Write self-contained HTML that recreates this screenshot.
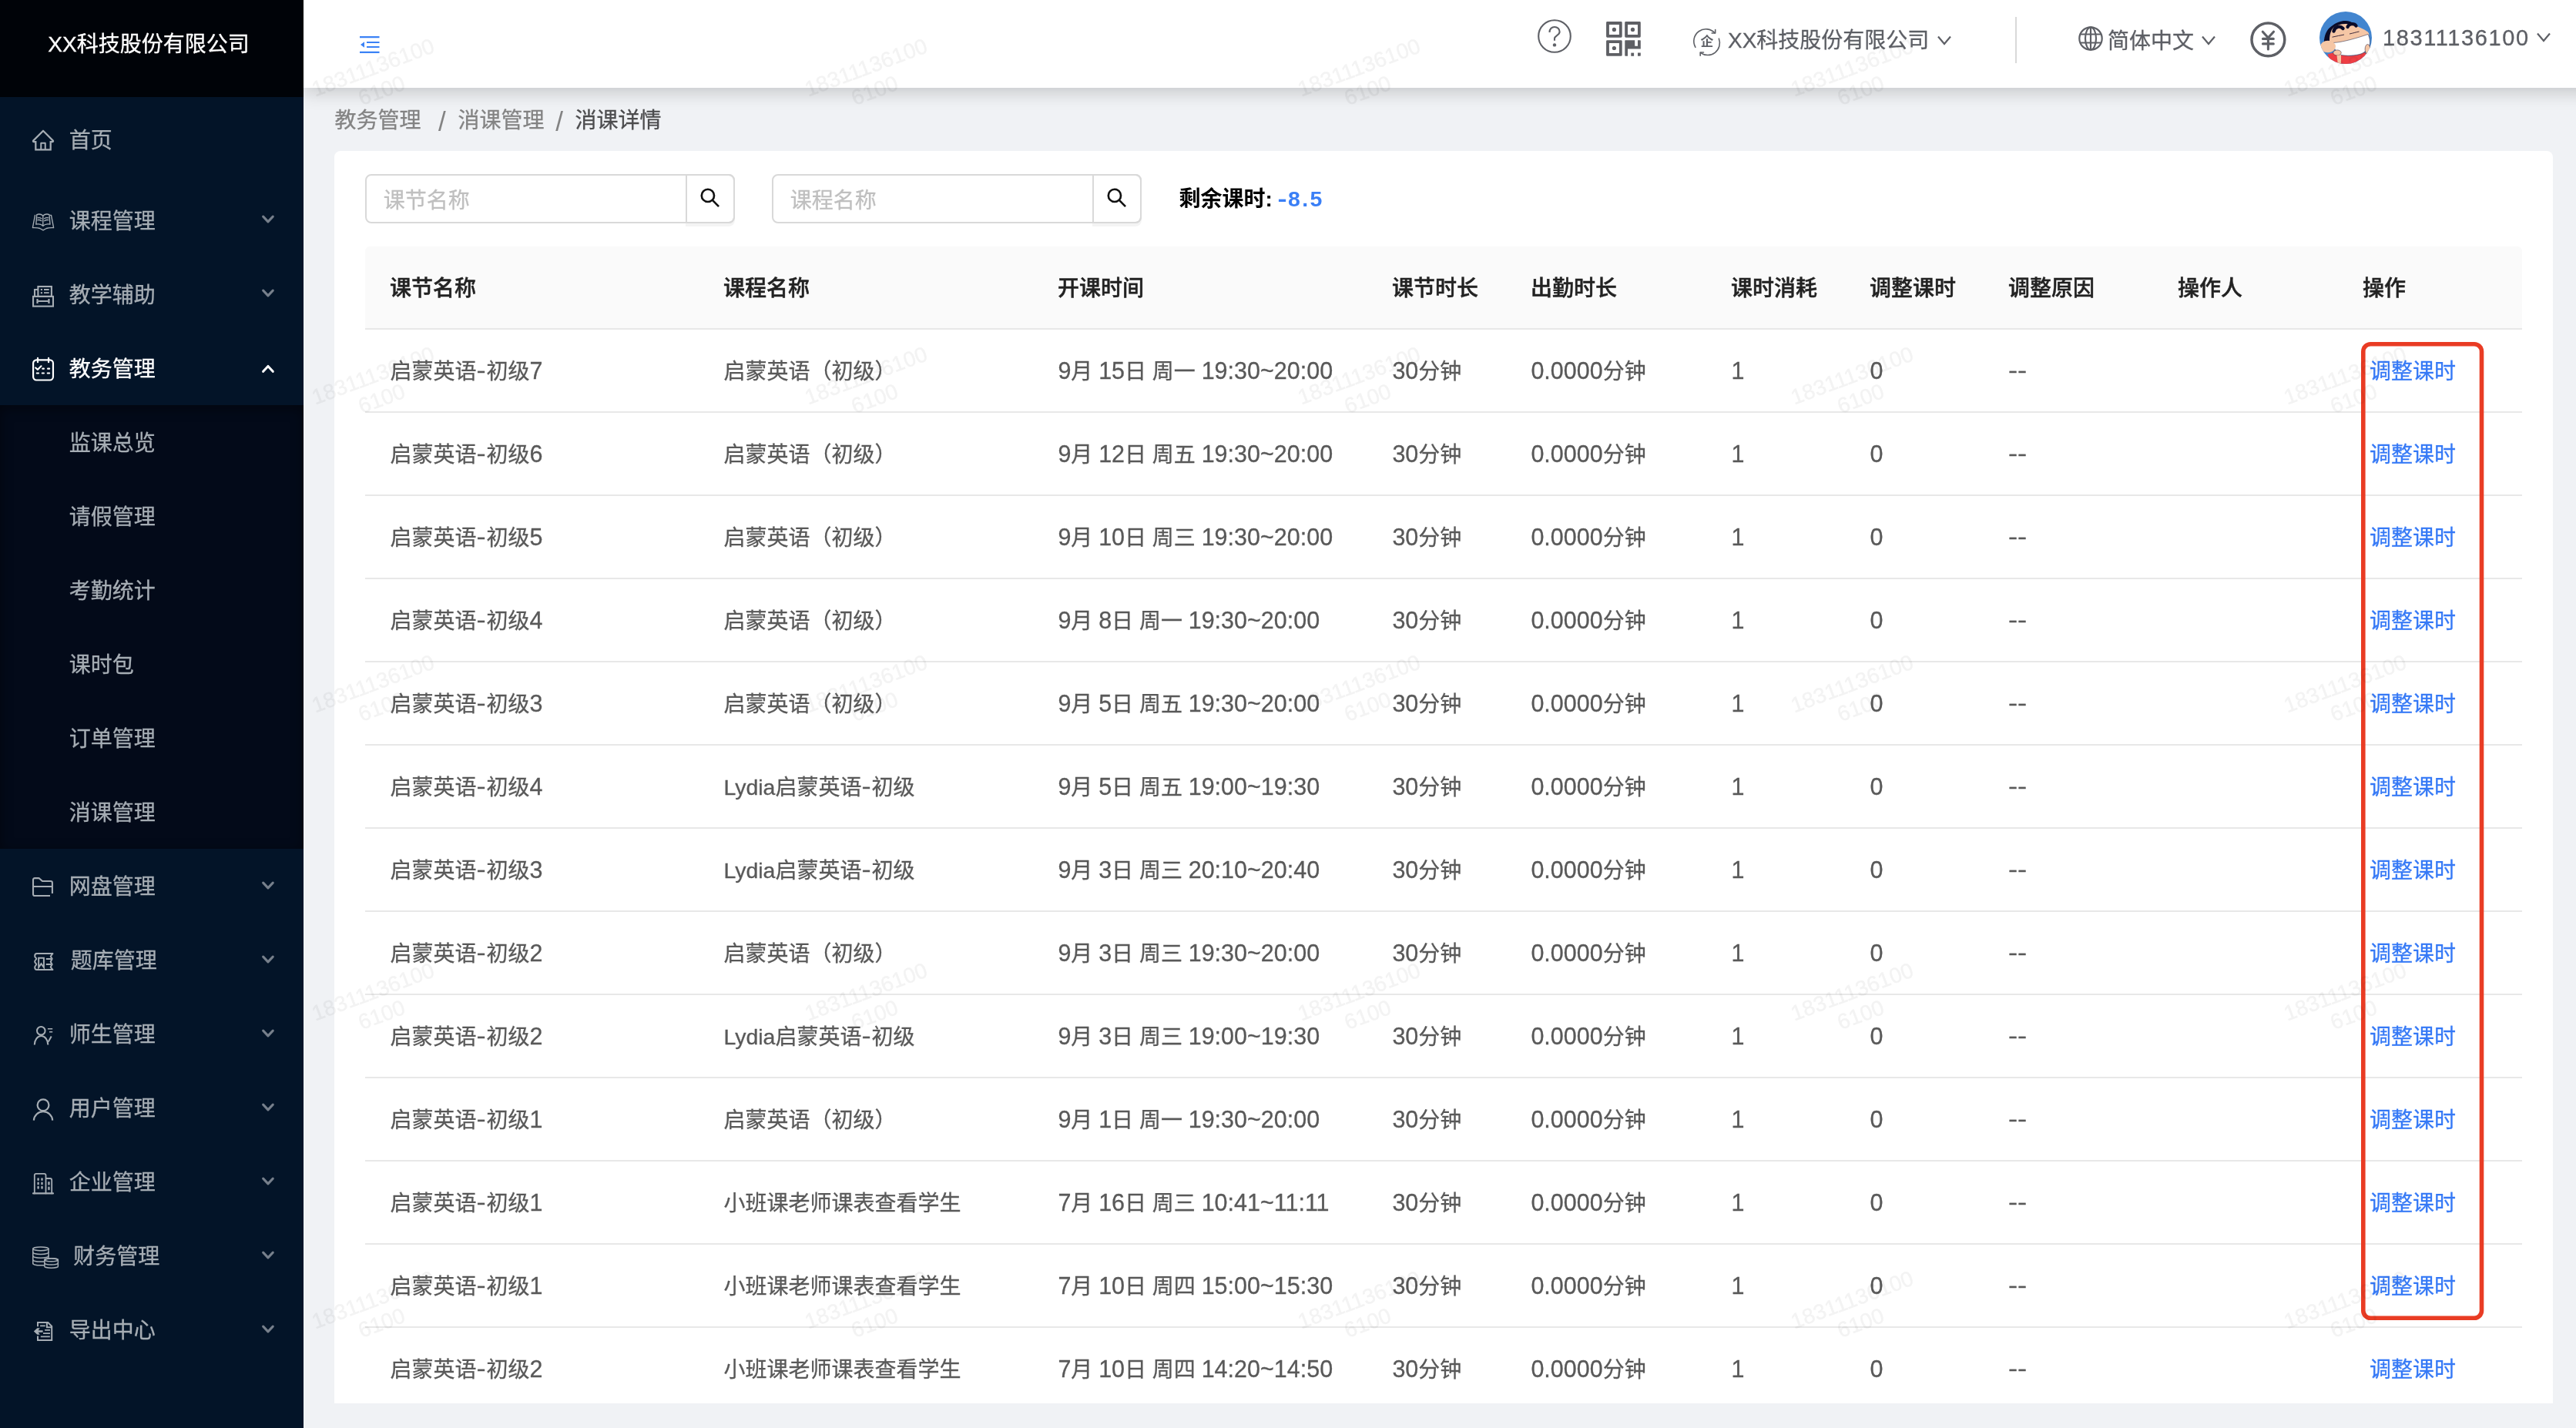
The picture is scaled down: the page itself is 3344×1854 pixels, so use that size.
<!DOCTYPE html>
<html lang="zh-CN"><head><meta charset="utf-8"><title>消课详情</title>
<style>
*{box-sizing:border-box;margin:0;padding:0}
html,body{width:3344px;height:1854px;overflow:hidden}
body{position:relative;background:#f0f2f5;font-family:"Liberation Sans","Noto Sans CJK SC",sans-serif;font-size:28px;color:#595959;-webkit-text-stroke:.3px}
ul{list-style:none}
svg{display:block;position:absolute;overflow:visible}
.side{will-change:transform;position:absolute;left:0;top:0;width:394px;height:1854px;background:#031428;z-index:5}
.logo{position:absolute;left:0;top:0;width:394px;height:126px;background:#000308;color:#fff;text-align:center;font-size:28px;line-height:116.5px;font-weight:400}
.logo span{position:relative;left:-4px}
.subbg{position:absolute;left:0;top:525.5px;width:394px;height:576px;background:#030a19;box-shadow:inset 0 4px 16px rgba(0,0,0,.45)}
.menu{position:absolute;left:0;top:0;width:394px;height:1854px}
.mi{position:absolute;left:0;width:394px;height:80px;line-height:80px;color:#a6adb4;font-size:28px;white-space:nowrap}
.mi.on{color:#fff}
.mi .mt{position:absolute;top:2.5px;margin-left:-1.2px}
.hdr{will-change:transform;position:absolute;left:394px;top:0;width:3050px;height:114px;background:#fff;box-shadow:0 6px 22px rgba(0,0,0,.18);z-index:3}
.hdr .ht{position:absolute;top:0;line-height:106px;color:#5d5f65;-webkit-text-stroke-color:#5d5f65;font-size:28px;white-space:nowrap;margin-left:-394px}
.hdr .ph{line-height:99px;letter-spacing:1.6px}
.hdr .ph .l{font-size:29px}
.vdiv{position:absolute;left:2222px;top:22px;width:2px;height:60px;background:#d9d9d9}
.bc{will-change:transform;position:absolute;left:0;top:114px;width:3344px;height:82px;font-size:28px;line-height:82px;white-space:nowrap}
.bc span{position:absolute;top:2.2px}
.bc .sep{font-size:35px;top:2.7px;-webkit-text-stroke:0}
.b1{color:#838383}.b2{color:#4c4c4e}
.card{will-change:transform;position:absolute;left:434px;top:195.5px;width:2880px;height:1626px;background:#fff;border-radius:8px 8px 0 0;overflow:hidden;z-index:1}
.inp{position:absolute;top:30px;width:480px;height:64px;border:2px solid #d9d9d9;border-radius:8px;background:#fff}
.inp .ph_{position:absolute;left:21.7px;top:2.5px;line-height:60px;color:#bfbfbf;font-size:28px}
.sbtn{position:absolute;right:-2px;top:-2px;width:64px;height:64px;border:2px solid #d9d9d9;border-radius:0 8px 8px 0;box-shadow:0 4px 0 rgba(0,0,0,.045)}
.remain{position:absolute;left:1096.5px;top:31px;line-height:63px;font-weight:700;color:#000;-webkit-text-stroke:0;font-size:28px;white-space:nowrap}
.remain .bl{color:#3a7ff6;margin-left:-1.5px}
.remain .l{font-size:28.5px;letter-spacing:2.3px;margin-left:1px}
.remain .hy{top:-.4px}
.tb{position:absolute;left:40px;top:124px;width:2800px;border-collapse:separate;border-spacing:0;table-layout:fixed;font-size:28px}
.tb th{-webkit-text-stroke:.45px;height:108px;line-height:44px;background:#fafafa;color:#222;font-weight:500;text-align:left;padding:4px 0 0 32px;border-bottom:2px solid #e8e8e8;white-space:nowrap}
.tb th:first-child{border-top-left-radius:6px}.tb th:last-child{border-top-right-radius:6px}
.tb td{height:108px;line-height:44px;padding:4.6px 0 0 32.4px;border-bottom:2px solid #e8e8e8;color:#595959;white-space:nowrap;vertical-align:middle}
.l{font-size:30.5px;line-height:1}
.a{font-size:28.5px;line-height:1}
.h2{width:12px !important}
.hy{position:relative;top:-2.3px;display:inline-block;width:13px;text-align:center;transform:scaleX(1.3)}
.lk{color:#3579f6;padding-left:8.5px}
.redbox{left:2631.2px;top:248.4px}
.wm{will-change:transform;position:absolute;left:394px;top:0;width:2950px;height:1854px;overflow:hidden;z-index:9;pointer-events:none}
.w{-webkit-text-stroke:.5px #000;opacity:.047;position:absolute;width:300px;height:64px;margin-left:-394px;text-align:center;font-size:28px;line-height:32px;color:#000;transform:rotate(-20.5deg);white-space:nowrap}

</style></head><body>
<aside class="side">
<div class="logo"><span>XX科技股份有限公司</span></div>
<div class="subbg"></div>
<ul class="menu">
<li class="mi" style="top:140.5px"><svg style="left:42px;top:27.5px" width="28" height="28" viewBox="64 64 896 896" ><path d="M946.5 505L560.1 118.8l-25.9-25.9a31.5 31.5 0 0 0-44.4 0L77.5 505a63.9 63.9 0 0 0-18.8 46c.4 35.2 29.7 63.3 64.9 63.3h42.5V940h691.8V614.3h43.4c17.1 0 33.2-6.7 45.3-18.8a63.6 63.6 0 0 0 18.7-45.3c0-17-6.7-33.1-18.8-45.2zM568 868H456V664h112v204zm217.9-325.7V868H632V640c0-22.1-17.9-40-40-40H432c-22.1 0-40 17.9-40 40v228H238.1V542.3h-96l370-369.7 23.1 23.1L882 542.3h-96.1z" fill="#a6adb4"/></svg><span class="mt" style="left:91px">首页</span></li>
<li class="mi" style="top:245px"><svg style="left:42px;top:32px" width="28" height="23" viewBox="0 0 28 23" fill="none" stroke="#a6adb4" stroke-width="1.35" stroke-linecap="round" stroke-linejoin="round"><path d="M3.5 2.4 L0.4 18.7 C4 18.6 7.5 18.7 9.7 19.5 L14 21.8 L18.3 19.5 C20.5 18.7 24 18.6 27.6 18.7 L24.5 2.4 L23.4 2.4"/><path d="M4.8 14.2 L5.8 1.6 C8 0.8 11.5 1 13.8 3 C16.1 1 19.8 0.8 22 1.6 L23 14.2 C20 13.5 16.3 14 13.8 16.2 C11.3 14 8 13.5 4.8 14.2 Z"/><path d="M13.8 3 V16.2"/><path d="M6.9 5.8 C8.5 5.4 10.5 5.8 11.9 6.7 M6.9 8.7 C8.5 8.3 10.5 8.7 11.9 9.7 M15.7 6.7 C17 5.8 19 5.4 20.7 5.8 M15.7 9.7 C17 8.8 19 8.3 20.7 8.7"/></svg><span class="mt" style="left:91px">课程管理</span><svg style="left:340px;top:34px" width="16" height="12" viewBox="0 0 16 12" fill="none" stroke="#767f8b" stroke-width="3.1" stroke-linecap="round" stroke-linejoin="round"><path d="M1.65 2.1 L7.96 8.85 L14.26 2.1"/></svg></li>
<li class="mi" style="top:341px"><svg style="left:42px;top:29px" width="28" height="29" viewBox="0 0 28 29" ><g fill="none" stroke="#a6adb4" stroke-width="2.1" stroke-linejoin="miter"><rect x="1.05" y="14.9" width="25.9" height="12.75"/><rect x="7.4" y="2" width="17.5" height="12.9"/><path d="M3 14.9 V6 H7.4"/><path d="M6.5 18 V23.9 M21.45 18 V23.9 M6.5 21 H21.45" stroke-width="2.2"/><path d="M15 6 H21.7 M15 10.2 H21.7" stroke-width="1.8"/></g><rect x="10.8" y="4.95" width="2.2" height="2.1" fill="#a6adb4"/><rect x="10.8" y="9.15" width="2.2" height="2.1" fill="#a6adb4"/></svg><span class="mt" style="left:91px">教学辅助</span><svg style="left:340px;top:34px" width="16" height="12" viewBox="0 0 16 12" fill="none" stroke="#767f8b" stroke-width="3.1" stroke-linecap="round" stroke-linejoin="round"><path d="M1.65 2.1 L7.96 8.85 L14.26 2.1"/></svg></li>
<li class="mi on" style="top:437.5px"><svg style="left:42px;top:26.5px" width="28" height="31" viewBox="0 0 28 31" fill="none" stroke="#fff" stroke-width="2.2" stroke-linecap="round" stroke-linejoin="round"><rect x="1.1" y="3.4" width="25.85" height="26.1" rx="4.2"/><path d="M7 0.9 V6.2 M21.05 0.9 V6.2"/><path d="M4.2 13.5 L7 15.8 L11.5 11.3"/><path d="M13.3 14.65 H14.9 M20.1 14.65 H22.1 M5.8 20.5 H8 M12.8 20.5 H14.9 M19.8 20.5 H22.1"/></svg><span class="mt" style="left:91px">教务管理</span><svg style="left:340px;top:34px" width="16" height="12" viewBox="0 0 16 12" fill="none" stroke="#fff" stroke-width="3.1" stroke-linecap="round" stroke-linejoin="round"><path d="M1.65 10.25 L7.96 3.5 L14.26 10.25"/></svg></li>
<li class="mi" style="top:1109.5px"><svg style="left:42px;top:28.5px" width="28" height="27" viewBox="0 0 28 27" ><path d="M23 25.05 H3.2 Q1 25.05 1 22.8 V4.3 Q1 2.1 3.2 2.1 H8 Q8.8 2.1 9.4 2.7 L12.4 5.4 Q13 6 13.9 6 H23.7 Q25.9 6 25.9 8.2 V22.1 M1 13 H25.9" fill="none" stroke="#a6adb4" stroke-width="2.1"/></svg><span class="mt" style="left:91px">网盘管理</span><svg style="left:340px;top:34px" width="16" height="12" viewBox="0 0 16 12" fill="none" stroke="#767f8b" stroke-width="3.1" stroke-linecap="round" stroke-linejoin="round"><path d="M1.65 2.1 L7.96 8.85 L14.26 2.1"/></svg></li>
<li class="mi" style="top:1205.5px"><svg style="left:44px;top:31.5px" width="26" height="24" viewBox="0 0 26 24" fill="none" stroke="#a6adb4" stroke-width="2" stroke-linecap="round" stroke-linejoin="round"><path d="M24.4 1.1 H3.8 C1.5 1.1 1.2 3 1.2 4.2 C1.2 6.5 3.2 6.5 3.2 7.8 C3.2 9 1.2 9.5 1.2 11.4 C1.2 13.5 3.2 13.5 3.2 15.1 C3.2 16.5 1.2 16.8 1.2 18.7 C1.2 20.5 1.8 21.95 3.8 21.95 H24.4"/><path d="M24.2 1.1 L21.7 4.7 L23.65 7.8 L21.7 11.7 L23.65 15.1 L21.7 18.6 L24.2 21.95"/><path d="M6.15 6.7 H12.9 V19 L9.5 14.25 L6.15 19 Z" stroke-linejoin="miter"/><path d="M15.8 7.95 H22.6 M15.8 15.1 H22.6" stroke-linecap="butt"/></svg><span class="mt" style="left:93px">题库管理</span><svg style="left:340px;top:34px" width="16" height="12" viewBox="0 0 16 12" fill="none" stroke="#767f8b" stroke-width="3.1" stroke-linecap="round" stroke-linejoin="round"><path d="M1.65 2.1 L7.96 8.85 L14.26 2.1"/></svg></li>
<li class="mi" style="top:1301.5px"><svg style="left:44px;top:29.5px" width="26" height="27" viewBox="0 0 26 27" ><g fill="none" stroke="#a6adb4" stroke-width="2"><circle cx="9.3" cy="7.3" r="5.3"/><path d="M0.8 25.5 A8.75 11.5 0 0 1 18.3 25.5"/><path d="M22.7 14.5 L18.7 21.6"/><path d="M17.9 4.7 H24.2 M20 8.8 H24.2" stroke-width="1.6"/></g></svg><span class="mt" style="left:91px">师生管理</span><svg style="left:340px;top:34px" width="16" height="12" viewBox="0 0 16 12" fill="none" stroke="#767f8b" stroke-width="3.1" stroke-linecap="round" stroke-linejoin="round"><path d="M1.65 2.1 L7.96 8.85 L14.26 2.1"/></svg></li>
<li class="mi" style="top:1397.5px"><svg style="left:42px;top:27.5px" width="28" height="31" viewBox="0 0 28 31" ><g fill="none" stroke="#a6adb4" stroke-width="2.2"><circle cx="14.03" cy="9.7" r="7.4"/><path d="M1.85 29.6 A12.2 12.2 0 0 1 26.2 29.6"/></g></svg><span class="mt" style="left:91px">用户管理</span><svg style="left:340px;top:34px" width="16" height="12" viewBox="0 0 16 12" fill="none" stroke="#767f8b" stroke-width="3.1" stroke-linecap="round" stroke-linejoin="round"><path d="M1.65 2.1 L7.96 8.85 L14.26 2.1"/></svg></li>
<li class="mi" style="top:1493.5px"><svg style="left:42px;top:28.5px" width="28" height="29" viewBox="0 0 28 29" fill="none" stroke="#a6adb4" stroke-width="1.8" stroke-linecap="round" stroke-linejoin="round"><path d="M1 27.4 H27" stroke-width="2.1"/><path d="M2.8 27.4 V4 Q2.8 1.8 5 1.8 H15.3 Q17.5 1.8 17.5 4 V27.4 M17.5 8 H23 Q25.2 8 25.2 10.2 V27.4"/><path d="M7.6 8.35 V9.85 M12.5 8.35 V9.85 M7.6 13.65 V15.15 M12.5 13.65 V15.15 M7.6 18.95 V20.45 M12.5 18.95 V20.45 M21.45 13.2 V15.6 M21.45 19.65 V22.05" stroke-width="2.4"/></svg><span class="mt" style="left:91px">企业管理</span><svg style="left:340px;top:34px" width="16" height="12" viewBox="0 0 16 12" fill="none" stroke="#767f8b" stroke-width="3.1" stroke-linecap="round" stroke-linejoin="round"><path d="M1.65 2.1 L7.96 8.85 L14.26 2.1"/></svg></li>
<li class="mi" style="top:1589.5px"><svg style="left:42px;top:28.5px" width="35" height="30" viewBox="0 0 35 30" fill="none" stroke="#a6adb4" stroke-width="1.5" stroke-linecap="round" stroke-linejoin="round"><ellipse cx="10.86" cy="3.35" rx="10.1" ry="2.35"/><path d="M0.76 3.35 V22.5 M20.96 3.35 V16"/><path d="M0.76 8.05 A10.1 2.35 0 0 0 20.96 8.05 M0.76 12.8 A10.1 2.35 0 0 0 20.96 12.8 M0.76 17.7 A10.1 2.35 0 0 0 20.96 17.7 M0.76 22.5 A10.1 2.35 0 0 0 20.96 22.5"/><path d="M15.85 17.8 A8.75 1.95 0 0 1 33.35 17.8 V26.2 A8.75 1.95 0 0 1 15.85 26.2 Z" fill="#031428"/><ellipse cx="24.6" cy="17.8" rx="8.75" ry="1.95"/><path d="M15.85 22 A8.75 1.95 0 0 0 33.35 22"/></svg><span class="mt" style="left:96.5px">财务管理</span><svg style="left:340px;top:34px" width="16" height="12" viewBox="0 0 16 12" fill="none" stroke="#767f8b" stroke-width="3.1" stroke-linecap="round" stroke-linejoin="round"><path d="M1.65 2.1 L7.96 8.85 L14.26 2.1"/></svg></li>
<li class="mi" style="top:1685.5px"><svg style="left:43px;top:30.5px" width="26" height="26" viewBox="0 0 26 26" ><g fill="none" stroke="#a6adb4" stroke-width="2"><path d="M6 6.3 V1.1 H19.3 L24.2 6 V23.9 H6 V18.6"/><path d="M17.9 1.1 V7.3 H24.2"/><path d="M9.1 5.45 H15.8 M15.1 10.8 H22 M13 15.1 H22 M9.8 19.45 H21.85" stroke-width="1.7"/></g><path d="M0.85 12.45 L5.3 8.25 L8.7 8.25 L6.7 11.3 L12.6 11.3 L12.6 13.7 L6.7 13.7 L8.7 16.8 L5.3 16.8 Z" fill="#a6adb4"/></svg><span class="mt" style="left:91px">导出中心</span><svg style="left:340px;top:34px" width="16" height="12" viewBox="0 0 16 12" fill="none" stroke="#767f8b" stroke-width="3.1" stroke-linecap="round" stroke-linejoin="round"><path d="M1.65 2.1 L7.96 8.85 L14.26 2.1"/></svg></li>
<li class="mi sub" style="top:533.5px"><span class="mt" style="left:91px">监课总览</span></li>
<li class="mi sub" style="top:629.5px"><span class="mt" style="left:91px">请假管理</span></li>
<li class="mi sub" style="top:725.5px"><span class="mt" style="left:91px">考勤统计</span></li>
<li class="mi sub" style="top:821.5px"><span class="mt" style="left:91px">课时包</span></li>
<li class="mi sub" style="top:917.5px"><span class="mt" style="left:91px">订单管理</span></li>
<li class="mi sub" style="top:1013.5px"><span class="mt" style="left:91px">消课管理</span></li>
</ul>
</aside>
<header class="hdr">
<svg style="left:73px;top:47px" width="26" height="22" viewBox="0 0 26 22" ><path d="M0 1.2 H25.5 M9 8 H25.5 M9 14 H25.5 M0 20.8 H25.5" stroke="#3b82f6" stroke-width="2.2" fill="none"/><path d="M1 11 L6 7.2 V14.8 Z" fill="#3b82f6"/></svg><svg style="left:1602px;top:25px" width="44" height="44" viewBox="0 0 44 44" ><circle cx="22" cy="22" r="20.8" fill="none" stroke="#5e6066" stroke-width="2.1"/><path d="M15.5 17 C15.5 12.5 18.5 10 22 10 C25.8 10 28.6 12.8 28.6 16.3 C28.6 21 22 21 22 25 V27.8" fill="none" stroke="#5e6066" stroke-width="2.1"/><circle cx="22" cy="33.4" r="2.2" fill="#5e6066"/></svg><svg style="left:1691px;top:28px" width="45" height="45" viewBox="0 0 45 45" ><g fill="#5e5f64"><path fill-rule="evenodd" d="M1.5 0.1 H19.3 Q20.700000000000003 0.1 20.700000000000003 1.5 V19.3 Q20.700000000000003 20.700000000000003 19.3 20.700000000000003 H1.5 Q0.1 20.700000000000003 0.1 19.3 V1.5 Q0.1 0.1 1.5 0.1 Z M3.9 3.9 V16.900000000000002 H16.900000000000002 V3.9 Z"/><circle cx="10.4" cy="10.4" r="2.6"/><path fill-rule="evenodd" d="M25.599999999999998 0.1 H43.4 Q44.8 0.1 44.8 1.5 V19.3 Q44.8 20.700000000000003 43.4 20.700000000000003 H25.599999999999998 Q24.2 20.700000000000003 24.2 19.3 V1.5 Q24.2 0.1 25.599999999999998 0.1 Z M28.0 3.9 V16.900000000000002 H41.0 V3.9 Z"/><circle cx="34.5" cy="10.4" r="2.6"/><path fill-rule="evenodd" d="M1.5 24.2 H19.3 Q20.700000000000003 24.2 20.700000000000003 25.599999999999998 V43.4 Q20.700000000000003 44.8 19.3 44.8 H1.5 Q0.1 44.8 0.1 43.4 V25.599999999999998 Q0.1 24.2 1.5 24.2 Z M3.9 28.0 V41.0 H16.900000000000002 V28.0 Z"/><circle cx="10.4" cy="34.5" r="2.6"/><path d="M24.3 24.9 Q24.3 24.2 25 24.2 H37.2 V31.7 H41 V24.2 H44.1 Q44.8 24.2 44.8 24.9 V35.5 H28 V44.8 H25 Q24.3 44.8 24.3 44.1 Z"/><rect x="32.3" y="40.6" width="3.8" height="4.2"/><path d="M41 40.6 H44.8 V44.1 Q44.8 44.8 44.1 44.8 H41 Z"/></g></svg><svg style="left:1805px;top:36.5px" width="34" height="36" viewBox="0 0 34 36" ><g fill="none" stroke="#5e6066" stroke-width="1.6" stroke-linecap="round" stroke-linejoin="round"><path d="M1.9 24.3 A15.7 15.7 0 0 1 27.2 6"/><path d="M27.7 1.5 V6 H23.2"/><path d="M32.4 13.2 A15.7 15.7 0 0 1 8.6 31.6"/><path d="M8.2 35.3 V31 H12.5"/></g><text x="16.9" y="23.1" font-size="16.8" font-weight="700" text-anchor="middle" fill="#5e6066" font-family="Liberation Sans, Noto Sans CJK SC, sans-serif">企</text></svg><span class="ht" style="left:2243px">XX科技股份有限公司</span><svg style="left:2121px;top:45.5px" width="18" height="13" viewBox="0 0 18 13" ><path d="M1 1.5 L9 11 L17 1.5" fill="none" stroke="#5e6066" stroke-width="2.2"/></svg><i class="vdiv"></i><svg style="left:2304px;top:34px" width="32" height="32" viewBox="0 0 32 32" ><g fill="none" stroke="#5e6066" stroke-width="2.2"><circle cx="16" cy="16" r="14.7"/><ellipse cx="16" cy="16" rx="7" ry="14.7"/><path d="M16 1.3 V30.7 M2.5 10.5 H29.5 M2.5 21.5 H29.5"/></g></svg><span class="ht" style="left:2736px;top:1.3px">简体中文</span><svg style="left:2464px;top:45.5px" width="18" height="13" viewBox="0 0 18 13" ><path d="M1 1.5 L9 11 L17 1.5" fill="none" stroke="#5e6066" stroke-width="2.2"/></svg><svg style="left:2527px;top:27.8px" width="47" height="47" viewBox="0 0 47 47" ><g fill="none" stroke="#5e6066" stroke-linecap="round" stroke-linejoin="round"><circle cx="23.4" cy="23.4" r="21.4" stroke-width="3.5"/><path d="M16.3 13.2 L23.4 21 L30.5 13.2 M23.4 21 V36 M16.5 22.4 H30.3 M16.5 28.9 H30.3" stroke-width="3.1"/></g></svg><svg style="left:2617px;top:14.8px" width="68" height="68" viewBox="0 0 68 68" ><defs><clipPath id="avc"><circle cx="34" cy="34" r="34"/></clipPath></defs><g clip-path="url(#avc)"><rect width="68" height="68" fill="#4285cf"/><path d="M5.8 41 C6 30 10 23 15 19.5 C22 13.5 30 11.5 34 12 C42 12.5 49 17 53 23.5 L40 32 L14 44 Z" fill="#0b0b28"/><path d="M13 37 C13 28 16 23 18 21 C24 16 34 15 42 17 C50 19 58 23 63 26.5 C65 29 64.5 32 63 34 L20 46 C15 44 13 41 13 37 Z" fill="#f5c6a5"/><path d="M18.5 25.5 C20 19 27 18 30.5 22" fill="none" stroke="#0b0b28" stroke-width="4.4" stroke-linecap="round"/><path d="M36.5 20 C38 15.5 45 15 47.5 18.5" fill="none" stroke="#0b0b28" stroke-width="4.2" stroke-linecap="round"/><path d="M16.5 33.2 C22 32.2 27 30.7 32 30 M39 29 C44 28 48 26.6 51.5 26" fill="none" stroke="#2a1a30" stroke-width=".9"/><path d="M10.5 55.5 L22 52 L26 56 C36 58.5 50 58 58 53 L64 56 L55 70 L16 70 Z" fill="#ee3e44"/><path d="M17.5 40.5 C30 40 50 34 63 29.5 C66 35 66 42 64.5 45 C62 50 58 54 52 55.5 C42 58 30 57.5 25 55.5 C21 52 18 46 17.5 40.5 Z" fill="#fff" stroke="#1a1a3a" stroke-width=".5"/><ellipse cx="11" cy="45.5" rx="10" ry="7.8" fill="#f5c6a5"/><ellipse cx="23" cy="53.5" rx="5.2" ry="3.6" fill="#f5c6a5" stroke="#2a1a30" stroke-width=".5"/><path d="M22.5 57 L28 56 L28 69 L24 69 Z" fill="#f5c6a5"/><ellipse cx="62.5" cy="49" rx="3.4" ry="6.5" fill="#f5c6a5" stroke="#2a1a30" stroke-width=".5"/></g></svg><span class="ht ph" style="left:3093px"><span class="l">18311136100</span></span><svg style="left:2899.1px;top:42.4px" width="18" height="13" viewBox="0 0 18 13" ><path d="M1 1.5 L9 11 L17 1.5" fill="none" stroke="#5e6066" stroke-width="2.2"/></svg>
</header>
<nav class="bc"><span class="b1" style="left:434.5px">教务管理</span><span class="b1 sep" style="left:569px">/</span><span class="b1" style="left:594.5px">消课管理</span><span class="b1 sep" style="left:721.3px">/</span><span class="b2" style="left:746.5px">消课详情</span></nav>
<main class="card">
<div class="inp" style="left:40px"><span class="ph_">课节名称</span><b class="sbtn"><svg style="left:16.6px;top:16.2px" width="25.5" height="25.5" viewBox="0 0 27 27" fill="none" stroke="#111" stroke-width="2.8"><circle cx="10.5" cy="10.5" r="8.6"/><path d="M16.8 16.8 L25.5 25.5" stroke-linecap="butt"/></svg></b></div>
<div class="inp" style="left:568px"><span class="ph_">课程名称</span><b class="sbtn"><svg style="left:16.6px;top:16.2px" width="25.5" height="25.5" viewBox="0 0 27 27" fill="none" stroke="#111" stroke-width="2.8"><circle cx="10.5" cy="10.5" r="8.6"/><path d="M16.8 16.8 L25.5 25.5" stroke-linecap="butt"/></svg></b></div>
<div class="remain">剩余课时: <span class="bl"><span class="hy">-</span><span class="l">8.5</span></span></div>
<table class="tb"><colgroup><col style="width:433px"><col style="width:434px"><col style="width:434px"><col style="width:180px"><col style="width:260px"><col style="width:180px"><col style="width:180px"><col style="width:220px"><col style="width:240px"><col style="width:239px"></colgroup>
<thead><tr><th>课节名称</th><th>课程名称</th><th>开课时间</th><th>课节时长</th><th>出勤时长</th><th>课时消耗</th><th>调整课时</th><th>调整原因</th><th>操作人</th><th>操作</th></tr></thead>
<tbody>
<tr><td>启蒙英语<span class="hy">-</span>初级<span class="l">7</span></td><td>启蒙英语（初级）</td><td><span class="l">9</span>月 <span class="l">15</span>日 周一 <span class="l">19:30~20:00</span></td><td><span class="l">30</span>分钟</td><td><span class="l">0.0000</span>分钟</td><td><span class="l">1</span></td><td><span class="l">0</span></td><td><span class="hy h2">-</span><span class="hy h2">-</span></td><td></td><td><a class="lk">调整课时</a></td></tr>
<tr><td>启蒙英语<span class="hy">-</span>初级<span class="l">6</span></td><td>启蒙英语（初级）</td><td><span class="l">9</span>月 <span class="l">12</span>日 周五 <span class="l">19:30~20:00</span></td><td><span class="l">30</span>分钟</td><td><span class="l">0.0000</span>分钟</td><td><span class="l">1</span></td><td><span class="l">0</span></td><td><span class="hy h2">-</span><span class="hy h2">-</span></td><td></td><td><a class="lk">调整课时</a></td></tr>
<tr><td>启蒙英语<span class="hy">-</span>初级<span class="l">5</span></td><td>启蒙英语（初级）</td><td><span class="l">9</span>月 <span class="l">10</span>日 周三 <span class="l">19:30~20:00</span></td><td><span class="l">30</span>分钟</td><td><span class="l">0.0000</span>分钟</td><td><span class="l">1</span></td><td><span class="l">0</span></td><td><span class="hy h2">-</span><span class="hy h2">-</span></td><td></td><td><a class="lk">调整课时</a></td></tr>
<tr><td>启蒙英语<span class="hy">-</span>初级<span class="l">4</span></td><td>启蒙英语（初级）</td><td><span class="l">9</span>月 <span class="l">8</span>日 周一 <span class="l">19:30~20:00</span></td><td><span class="l">30</span>分钟</td><td><span class="l">0.0000</span>分钟</td><td><span class="l">1</span></td><td><span class="l">0</span></td><td><span class="hy h2">-</span><span class="hy h2">-</span></td><td></td><td><a class="lk">调整课时</a></td></tr>
<tr><td>启蒙英语<span class="hy">-</span>初级<span class="l">3</span></td><td>启蒙英语（初级）</td><td><span class="l">9</span>月 <span class="l">5</span>日 周五 <span class="l">19:30~20:00</span></td><td><span class="l">30</span>分钟</td><td><span class="l">0.0000</span>分钟</td><td><span class="l">1</span></td><td><span class="l">0</span></td><td><span class="hy h2">-</span><span class="hy h2">-</span></td><td></td><td><a class="lk">调整课时</a></td></tr>
<tr><td>启蒙英语<span class="hy">-</span>初级<span class="l">4</span></td><td><span class="a">Lydia</span>启蒙英语<span class="hy">-</span>初级</td><td><span class="l">9</span>月 <span class="l">5</span>日 周五 <span class="l">19:00~19:30</span></td><td><span class="l">30</span>分钟</td><td><span class="l">0.0000</span>分钟</td><td><span class="l">1</span></td><td><span class="l">0</span></td><td><span class="hy h2">-</span><span class="hy h2">-</span></td><td></td><td><a class="lk">调整课时</a></td></tr>
<tr><td>启蒙英语<span class="hy">-</span>初级<span class="l">3</span></td><td><span class="a">Lydia</span>启蒙英语<span class="hy">-</span>初级</td><td><span class="l">9</span>月 <span class="l">3</span>日 周三 <span class="l">20:10~20:40</span></td><td><span class="l">30</span>分钟</td><td><span class="l">0.0000</span>分钟</td><td><span class="l">1</span></td><td><span class="l">0</span></td><td><span class="hy h2">-</span><span class="hy h2">-</span></td><td></td><td><a class="lk">调整课时</a></td></tr>
<tr><td>启蒙英语<span class="hy">-</span>初级<span class="l">2</span></td><td>启蒙英语（初级）</td><td><span class="l">9</span>月 <span class="l">3</span>日 周三 <span class="l">19:30~20:00</span></td><td><span class="l">30</span>分钟</td><td><span class="l">0.0000</span>分钟</td><td><span class="l">1</span></td><td><span class="l">0</span></td><td><span class="hy h2">-</span><span class="hy h2">-</span></td><td></td><td><a class="lk">调整课时</a></td></tr>
<tr><td>启蒙英语<span class="hy">-</span>初级<span class="l">2</span></td><td><span class="a">Lydia</span>启蒙英语<span class="hy">-</span>初级</td><td><span class="l">9</span>月 <span class="l">3</span>日 周三 <span class="l">19:00~19:30</span></td><td><span class="l">30</span>分钟</td><td><span class="l">0.0000</span>分钟</td><td><span class="l">1</span></td><td><span class="l">0</span></td><td><span class="hy h2">-</span><span class="hy h2">-</span></td><td></td><td><a class="lk">调整课时</a></td></tr>
<tr><td>启蒙英语<span class="hy">-</span>初级<span class="l">1</span></td><td>启蒙英语（初级）</td><td><span class="l">9</span>月 <span class="l">1</span>日 周一 <span class="l">19:30~20:00</span></td><td><span class="l">30</span>分钟</td><td><span class="l">0.0000</span>分钟</td><td><span class="l">1</span></td><td><span class="l">0</span></td><td><span class="hy h2">-</span><span class="hy h2">-</span></td><td></td><td><a class="lk">调整课时</a></td></tr>
<tr><td>启蒙英语<span class="hy">-</span>初级<span class="l">1</span></td><td>小班课老师课表查看学生</td><td><span class="l">7</span>月 <span class="l">16</span>日 周三 <span class="l">10:41~11:11</span></td><td><span class="l">30</span>分钟</td><td><span class="l">0.0000</span>分钟</td><td><span class="l">1</span></td><td><span class="l">0</span></td><td><span class="hy h2">-</span><span class="hy h2">-</span></td><td></td><td><a class="lk">调整课时</a></td></tr>
<tr><td>启蒙英语<span class="hy">-</span>初级<span class="l">1</span></td><td>小班课老师课表查看学生</td><td><span class="l">7</span>月 <span class="l">10</span>日 周四 <span class="l">15:00~15:30</span></td><td><span class="l">30</span>分钟</td><td><span class="l">0.0000</span>分钟</td><td><span class="l">1</span></td><td><span class="l">0</span></td><td><span class="hy h2">-</span><span class="hy h2">-</span></td><td></td><td><a class="lk">调整课时</a></td></tr>
<tr><td>启蒙英语<span class="hy">-</span>初级<span class="l">2</span></td><td>小班课老师课表查看学生</td><td><span class="l">7</span>月 <span class="l">10</span>日 周四 <span class="l">14:20~14:50</span></td><td><span class="l">30</span>分钟</td><td><span class="l">0.0000</span>分钟</td><td><span class="l">1</span></td><td><span class="l">0</span></td><td><span class="hy h2">-</span><span class="hy h2">-</span></td><td></td><td><a class="lk">调整课时</a></td></tr>
</tbody></table>
<svg class="redbox" width="159.3" height="1270" viewBox="0 0 159.3 1270"><rect x="2.8" y="2.8" width="153.7" height="1264.4" rx="9.5" fill="none" stroke="#e93c24" stroke-width="5.6"/></svg>
</main>
<div class="wm">
<div class="w" style="left:340.2px;top:70.7px">18311136100<br>6100</div><div class="w" style="left:980.2px;top:70.7px">18311136100<br>6100</div><div class="w" style="left:1620.2px;top:70.7px">18311136100<br>6100</div><div class="w" style="left:2260.2px;top:70.7px">18311136100<br>6100</div><div class="w" style="left:2900.2px;top:70.7px">18311136100<br>6100</div>
<div class="w" style="left:340.2px;top:470.7px">18311136100<br>6100</div><div class="w" style="left:980.2px;top:470.7px">18311136100<br>6100</div><div class="w" style="left:1620.2px;top:470.7px">18311136100<br>6100</div><div class="w" style="left:2260.2px;top:470.7px">18311136100<br>6100</div><div class="w" style="left:2900.2px;top:470.7px">18311136100<br>6100</div>
<div class="w" style="left:340.2px;top:870.7px">18311136100<br>6100</div><div class="w" style="left:980.2px;top:870.7px">18311136100<br>6100</div><div class="w" style="left:1620.2px;top:870.7px">18311136100<br>6100</div><div class="w" style="left:2260.2px;top:870.7px">18311136100<br>6100</div><div class="w" style="left:2900.2px;top:870.7px">18311136100<br>6100</div>
<div class="w" style="left:340.2px;top:1270.7px">18311136100<br>6100</div><div class="w" style="left:980.2px;top:1270.7px">18311136100<br>6100</div><div class="w" style="left:1620.2px;top:1270.7px">18311136100<br>6100</div><div class="w" style="left:2260.2px;top:1270.7px">18311136100<br>6100</div><div class="w" style="left:2900.2px;top:1270.7px">18311136100<br>6100</div>
<div class="w" style="left:340.2px;top:1670.7px">18311136100<br>6100</div><div class="w" style="left:980.2px;top:1670.7px">18311136100<br>6100</div><div class="w" style="left:1620.2px;top:1670.7px">18311136100<br>6100</div><div class="w" style="left:2260.2px;top:1670.7px">18311136100<br>6100</div><div class="w" style="left:2900.2px;top:1670.7px">18311136100<br>6100</div>
</div>
</body></html>
